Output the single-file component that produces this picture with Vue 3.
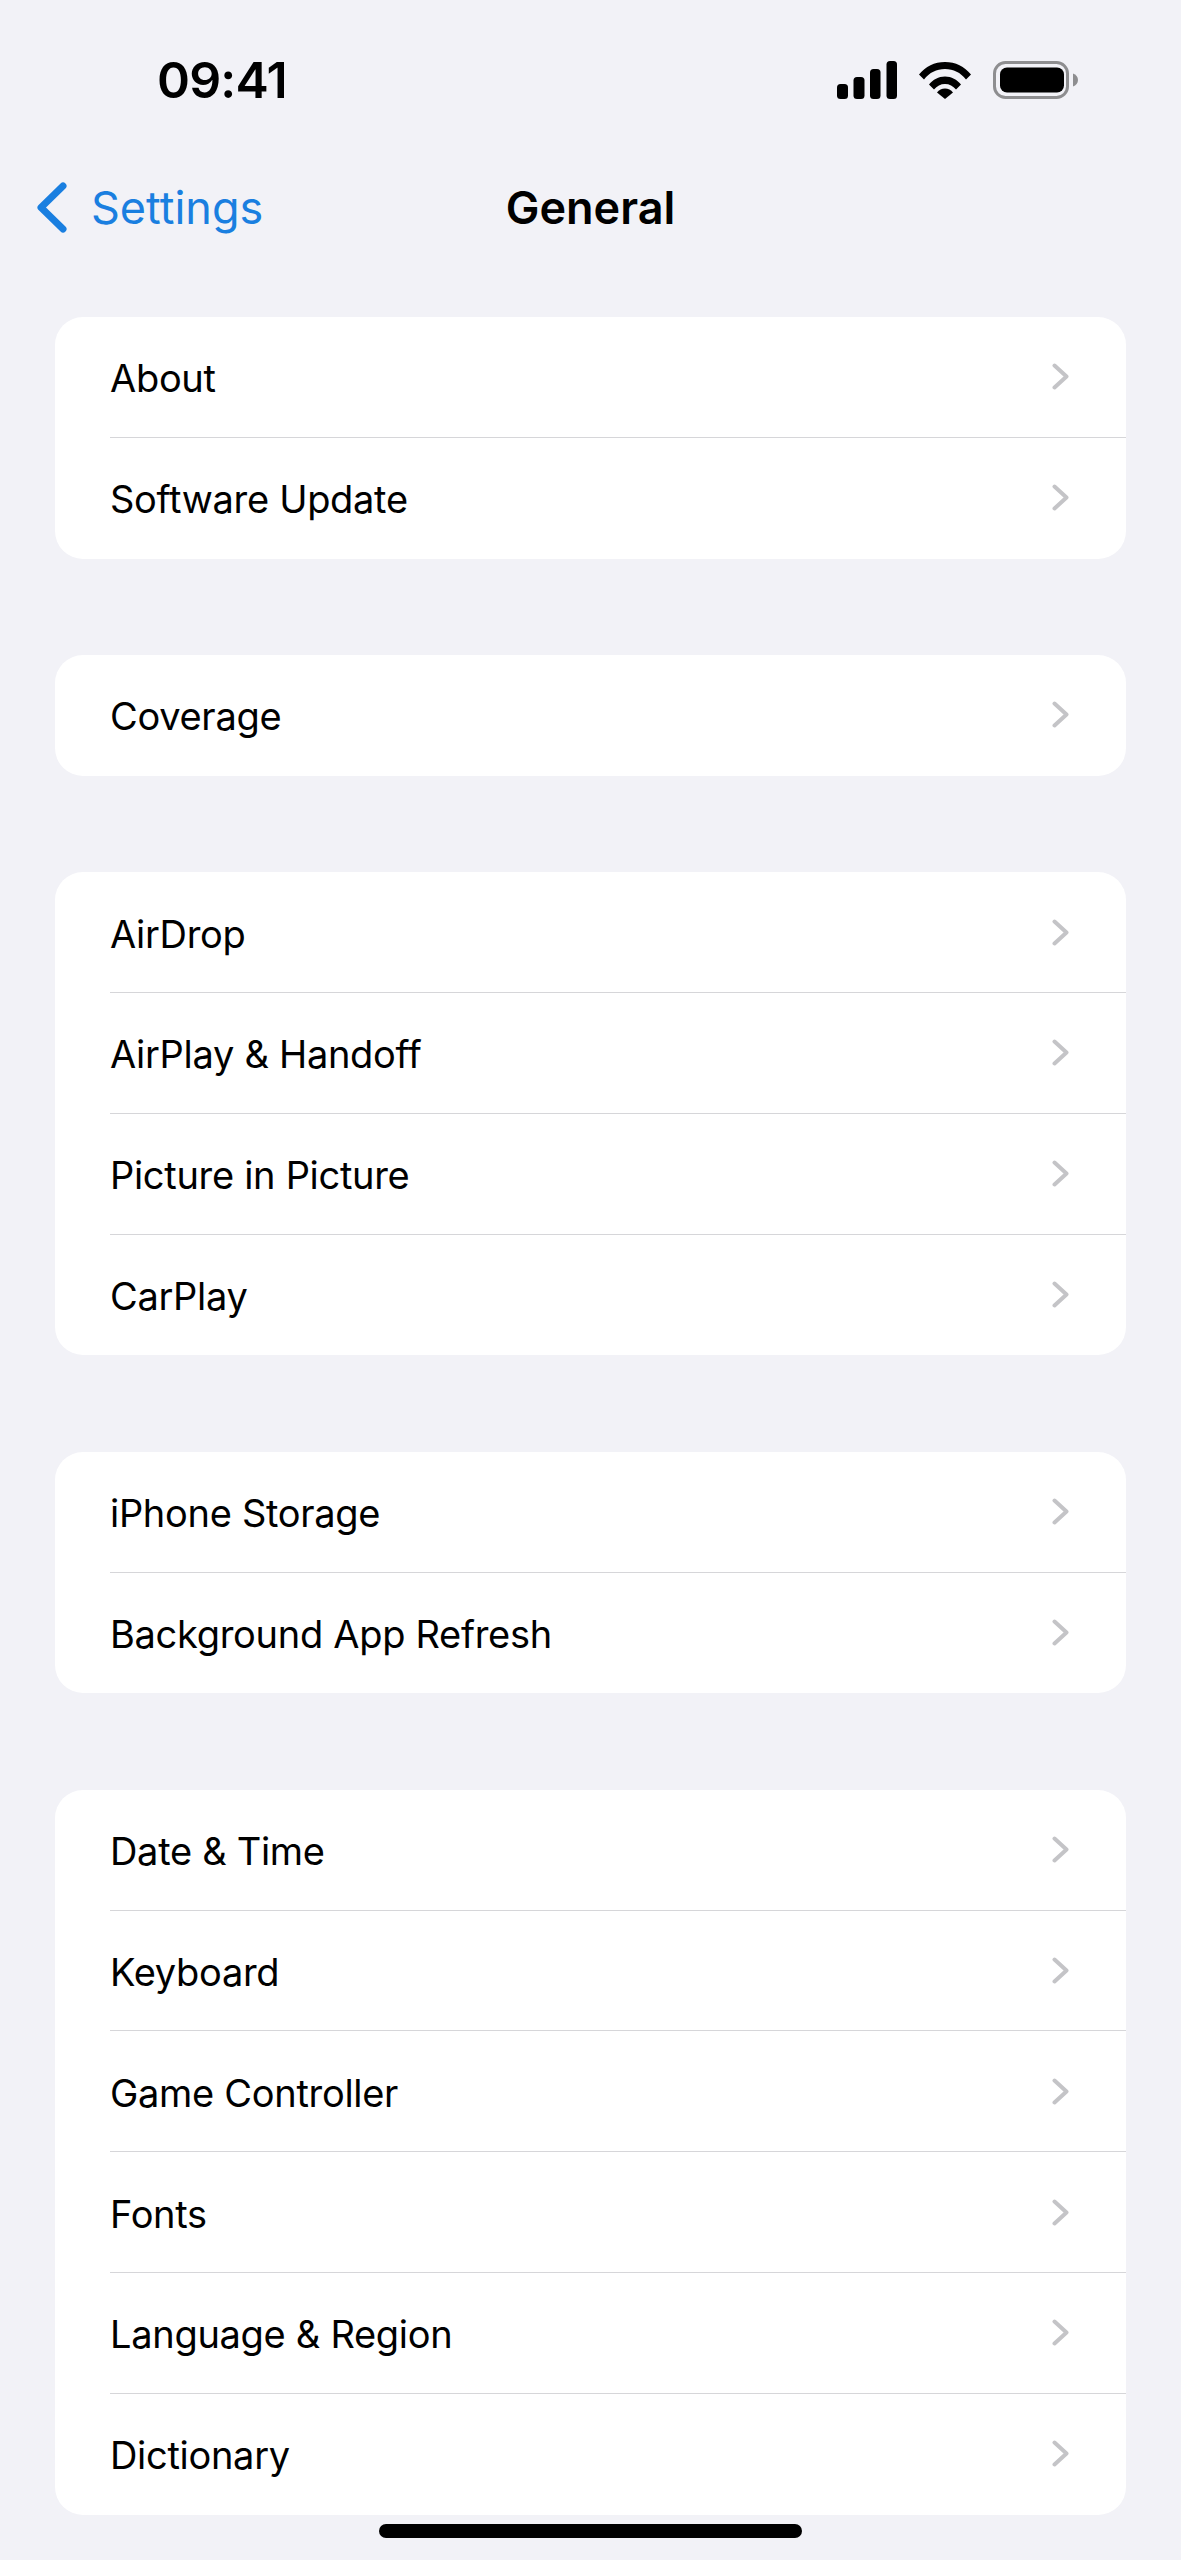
<script setup>
const groups = [
  ['About', 'Software Update'],
  ['Coverage'],
  ['AirDrop', 'AirPlay & Handoff', 'Picture in Picture', 'CarPlay'],
  ['iPhone Storage', 'Background App Refresh'],
  ['Date & Time', 'Keyboard', 'Game Controller', 'Fonts', 'Language & Region', 'Dictionary'],
]
</script>

<template>
  <div class="page">
    <header class="status">
      <span class="time">09:41</span>
      <div class="status-icons">
        <svg class="signal" width="60" height="38" viewBox="0 0 60 38" fill="#000">
          <rect x="0" y="23" width="11" height="15" rx="3.5" />
          <rect x="16.5" y="16" width="11" height="22" rx="3.5" />
          <rect x="33" y="8" width="10.5" height="30" rx="3.5" />
          <rect x="49.5" y="0" width="10.5" height="38" rx="3.5" />
        </svg>
        <svg class="wifi" width="54" height="38" viewBox="0 0 54 38" fill="#000">
          <path d="M1 13.5C7.5 5.5 16.5 1 27 1s19.500 4.500 26 12.500l-5 5C42.500 11.500 35.500 8 27 8S11.500 11.500 6 18.500z" />
          <path d="M11 23.500C15 18.500 20.500 15.500 27 15.500s12 3 16 8l-5 5C35 25 31.500 23 27 23s-8 2-11 5.500z" />
          <path d="M19 31.500C21 29 23.800 27.500 27 27.500s6 1.500 8 4L27 38z" />
        </svg>
        <svg class="battery" width="85" height="38" viewBox="0 0 85 38">
          <rect x="1.500" y="1.500" width="73" height="35" rx="11" fill="none" stroke="#8e8e90" stroke-width="3" />
          <rect x="7" y="6.500" width="64" height="25" rx="7" fill="#000" />
          <path d="M80 12.500c3 .8 5 3.500 5 6.500s-2 5.700-5 6.500z" fill="#8e8e90" />
        </svg>
      </div>
    </header>

    <nav class="nav">
      <div class="back">
        <svg width="30" height="51" viewBox="0 0 30 51" fill="none">
          <path d="M26 4 L4 25.500 L26 47" stroke="#1a7fe0" stroke-width="7" stroke-linecap="round" stroke-linejoin="round" />
        </svg>
        <span>Settings</span>
      </div>
      <h1 class="title">General</h1>
      <div></div>
    </nav>

    <main class="groups">
      <section v-for="(group, i) in groups" :key="i" class="card">
        <div v-for="label in group" :key="label" class="row">
          <div class="row-inner">
            <span class="label">{{ label }}</span>
            <svg class="chev" width="17" height="27" viewBox="0 0 17 27" fill="none">
              <path d="M2.500 2.500 L14.500 13.500 L2.500 24.500" stroke="#c4c4c7" stroke-width="4" stroke-linecap="round" stroke-linejoin="round" />
            </svg>
          </div>
        </div>
      </section>
    </main>

    <div class="home-bar"></div>
  </div>
</template>

<style>
html, body { margin: 0; background: #f2f2f7; }
</style>

<style scoped>
.page {
  position: relative;
  width: 1181px;
  height: 2560px;
  overflow: hidden;
  background: #f2f2f7;
  font-family: Inter, "Liberation Sans", sans-serif;
  color: #000;
}
.status {
  height: 160px;
  display: flex;
  align-items: center;
  justify-content: space-between;
  padding: 0 103px 0 157px;
}
.time {
  font-size: 50px;
  font-weight: 600;
  letter-spacing: -0.8px;
}
.status-icons {
  display: flex;
  align-items: center;
  gap: 21px;
}
.nav {
  height: 94px;
  display: grid;
  grid-template-columns: 1fr auto 1fr;
  align-items: center;
}
.back {
  display: flex;
  align-items: center;
  gap: 24px;
  padding-left: 37px;
  font-size: 45px;
  color: #1a7fe0;
}
.title {
  margin: 0;
  font-size: 45px;
  font-weight: 600;
}
.groups {
  margin-top: 63px;
  display: flex;
  flex-direction: column;
  gap: 96.4px;
  padding: 0 55px;
}
.card {
  background: #fff;
  border-radius: 28px;
  overflow: hidden;
}
.row { padding-left: 55px; }
.row-inner {
  height: 119.8px;
  display: flex;
  align-items: center;
  justify-content: space-between;
  padding-right: 57px;
  border-bottom: 1px solid #d6d6d9;
}
.row:last-child .row-inner { border-bottom-color: transparent; }
.label {
  padding-top: 3px;
  font-size: 38px;
  letter-spacing: -0.3px;
}
.home-bar {
  position: absolute;
  left: 379px;
  top: 2524px;
  width: 423px;
  height: 14px;
  border-radius: 7px;
  background: #000;
}
</style>
